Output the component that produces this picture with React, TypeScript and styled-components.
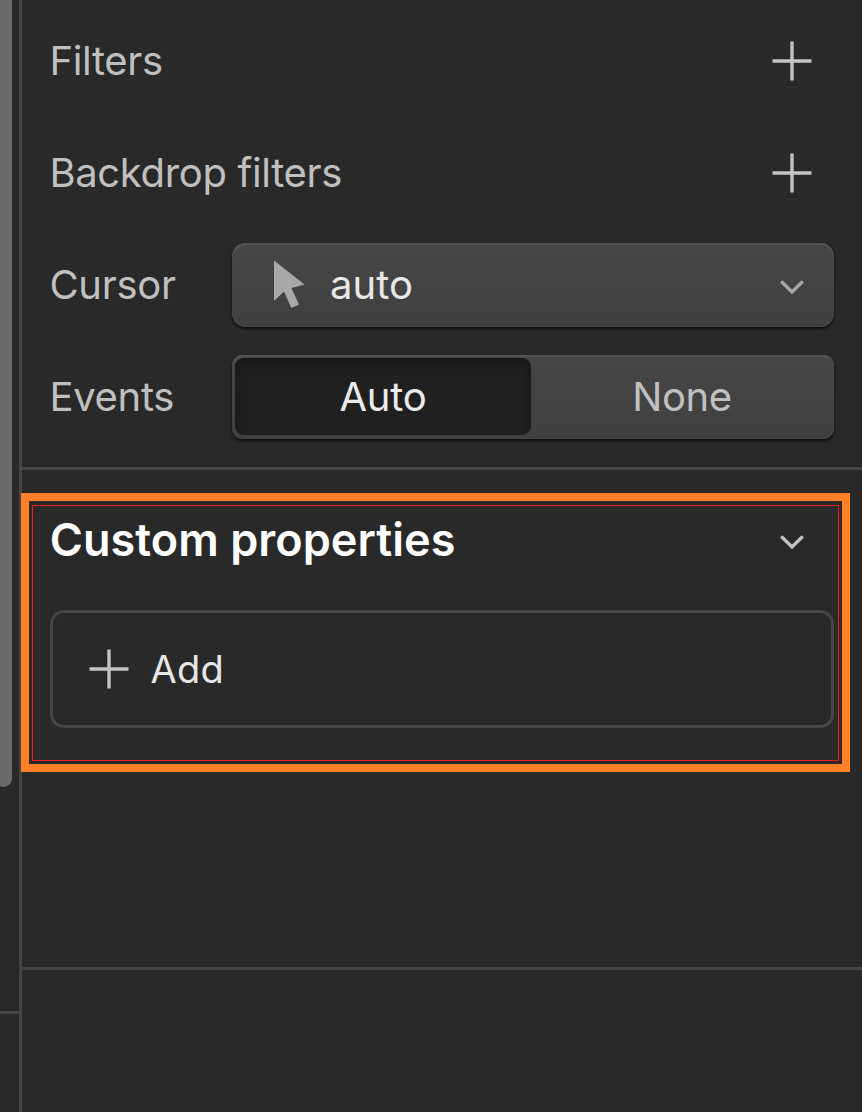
import React from "react";
import styled, { createGlobalStyle } from "styled-components";

const GlobalStyle = createGlobalStyle`
  *, *::before, *::after { box-sizing: border-box; }
  body {
    margin: 0;
    background: #292929;
    overflow: hidden;
    font-family: "Inter", "Liberation Sans", sans-serif;
  }
  button { font: inherit; color: inherit; border: 0; padding: 0; background: none; }
`;

const Layout = styled.div`
  display: grid;
  grid-template-columns: 19px 1fr;
  width: 100%;
  height: 1112px;
  overflow: hidden;
`;

const Gutter = styled.div`
  display: flex;
  flex-direction: column;
  overflow: hidden;
`;

const ScrollThumb = styled.div`
  width: 17px;
  height: 787px;
  margin: 0 0 224px -5px;
  border-radius: 0 0 8.5px 8.5px;
  background: #6b6b6b;
`;

const Divider = styled.div`
  flex: none;
  height: 3px;
  background: #444444;
`;

const Panel = styled.main`
  display: flex;
  flex-direction: column;
  border-left: 3px solid #444444;
`;

const StyleRows = styled.section`
  display: flex;
  flex-direction: column;
  gap: 28px;
  padding: 19px 28px 28px;
`;

const Row = styled.div`
  display: flex;
  align-items: center;
  height: 84px;
`;

const Label = styled.span<{ $fixed?: boolean }>`
  flex: ${(p) => (p.$fixed ? "0 0 182px" : "1")};
  font-size: 40px;
  line-height: 84px;
  letter-spacing: ${(p) => (p.$fixed ? "-0.3px" : "-0.34px")};
  text-indent: -0.6px;
  color: #c0c0c0;
  white-space: nowrap;
`;

const IconButton = styled.button<{ $low?: boolean }>`
  display: flex;
  align-items: center;
  justify-content: center;
  width: 84px;
  height: 84px;
  padding-top: ${(p) => (p.$low ? "2px" : "0")};
  color: #c4c4c4;
`;

const raised = `
  background: linear-gradient(#464646, #404040);
  box-shadow: inset 0 3px 2px -1px #565656, inset 0 0 2px #505050, 0 2px 3px #0c0c0c;
`;

const Select = styled.button`
  ${raised}
  flex: 1;
  display: flex;
  align-items: center;
  height: 84px;
  padding-left: 42px;
  border-radius: 14px;
  color: #a8a8a8;
`;

const SelectValue = styled.span`
  flex: 1;
  margin-left: 25px;
  padding-bottom: 1px;
  font-size: 40px;
  letter-spacing: 0.1px;
  text-align: left;
  color: #e8e8e8;
`;

const SelectArrow = styled.span`
  display: flex;
  justify-content: center;
  width: 84px;
  padding-top: 3px;
`;

const Segments = styled.div`
  ${raised}
  flex: 1;
  display: flex;
  height: 84px;
  padding: 3px 3px 4px;
  border-radius: 11px;
`;

const Segment = styled.button<{ $active?: boolean }>`
  flex: ${(p) => (p.$active ? "0 0 296px" : "1")};
  border-radius: 9px;
  font-size: 40px;
  line-height: 77px;
  letter-spacing: ${(p) => (p.$active ? "-0.2px" : "-0.4px")};
  text-indent: ${(p) => (p.$active ? "0" : "2px")};
  color: ${(p) => (p.$active ? "#ebebeb" : "#c0c0c0")};
  background: ${(p) => (p.$active ? "#202020" : "transparent")};
  box-shadow: ${(p) => (p.$active ? "inset 0 5px 12px #161616" : "none")};
`;

const CustomSection = styled.section`
  position: relative;
  display: flex;
  flex-direction: column;
  gap: 27px;
  height: 497px;
  padding: 29px 28px 0;
`;

const Title = styled.h2`
  flex: 1;
  margin: 0;
  padding-bottom: 2px;
  font-size: 45px;
  line-height: 82px;
  font-weight: 600;
  letter-spacing: 0.05px;
  text-indent: -0.3px;
  color: #ffffff;
  white-space: nowrap;
`;

const AddButton = styled.button`
  display: flex;
  align-items: center;
  gap: 21.5px;
  height: 118px;
  padding-left: 36px;
  border: 3px solid #464646;
  border-radius: 14px;
  font-size: 38px;
  letter-spacing: 0.2px;
  color: #e6e6e6;
`;

const PlusColor = styled.span`
  display: flex;
  color: #c4c4c4;
`;

const Highlight = styled.div`
  position: absolute;
  top: 23px;
  left: -1px;
  width: 829px;
  height: 279px;
  padding: 4px 3px 3px;
  border: 8px solid #ff8026;
  pointer-events: none;
`;

const HighlightInner = styled.div`
  height: 100%;
  border: 1px solid #ee1c24;
`;

const Plus = () => (
  <svg width="40" height="40" viewBox="0 0 40 40" fill="none" stroke="currentColor" strokeWidth="3.4">
    <path d="M.5 20h39M20 .5v39" />
  </svg>
);

const Chevron = () => (
  <svg width="26" height="16" viewBox="0 0 26 16" fill="none" stroke="currentColor" strokeWidth="3.3">
    <path d="M2.2 2.3 13 13 23.8 2.3" />
  </svg>
);

const Pointer = () => (
  <svg width="31" height="50" viewBox="0 0 31 50" fill="currentColor">
    <path d="M0 .5 30.5 24.6 17.3 28 25 44.4 17.3 48 10 31.6 0 41z" />
  </svg>
);

export default function App() {
  return (
    <>
      <GlobalStyle />
      <Layout>
        <Gutter>
          <ScrollThumb />
          <Divider />
        </Gutter>
        <Panel>
          <StyleRows>
            <Row>
              <Label>Filters</Label>
              <IconButton aria-label="Add filter"><Plus /></IconButton>
            </Row>
            <Row>
              <Label>Backdrop filters</Label>
              <IconButton aria-label="Add backdrop filter"><Plus /></IconButton>
            </Row>
            <Row>
              <Label $fixed>Cursor</Label>
              <Select>
                <Pointer />
                <SelectValue>auto</SelectValue>
                <SelectArrow><Chevron /></SelectArrow>
              </Select>
            </Row>
            <Row>
              <Label $fixed>Events</Label>
              <Segments>
                <Segment $active>Auto</Segment>
                <Segment>None</Segment>
              </Segments>
            </Row>
          </StyleRows>
          <Divider />
          <CustomSection>
            <Row>
              <Title>Custom properties</Title>
              <IconButton $low aria-label="Collapse section"><Chevron /></IconButton>
            </Row>
            <AddButton>
              <PlusColor><Plus /></PlusColor>
              Add
            </AddButton>
            <Highlight>
              <HighlightInner />
            </Highlight>
          </CustomSection>
          <Divider />
        </Panel>
      </Layout>
    </>
  );
}
